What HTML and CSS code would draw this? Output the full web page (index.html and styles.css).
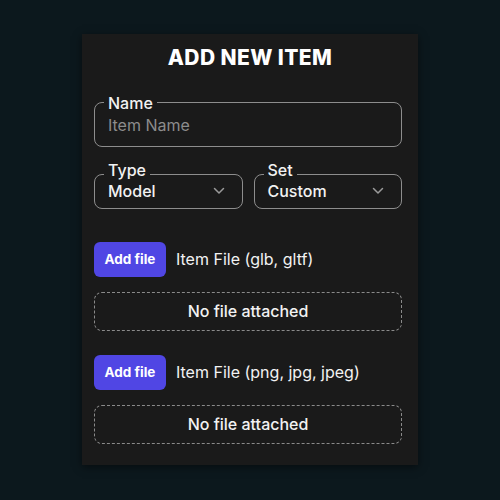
FILE: index.html
```html
<!DOCTYPE html>
<html lang="en">
<head>
    <meta charset="UTF-8">
    <meta name="viewport" content="width=device-width, initial-scale=1.0">
    <title>Add New Item</title>
    <link rel="stylesheet" href="styles.css">
</head>
<body>
    <div class="item-card">
        <h1 class="item-title">ADD NEW ITEM</h1>

        <fieldset class="field field-name">
            <legend class="field-label">Name</legend>
            <input class="field-input" type="text" placeholder="Item Name">
        </fieldset>

        <div class="field-row">
            <fieldset class="field field-select">
                <legend class="field-label">Type</legend>
                <div class="select-value">
                    <span>Model</span>
                    <svg class="chevron" width="12" height="8" viewBox="0 0 12 8"><path d="M1.5 1.5 L6 6 L10.5 1.5" fill="none" stroke="#9a9a9a" stroke-width="1.5" stroke-linecap="round" stroke-linejoin="round"/></svg>
                </div>
            </fieldset>
            <fieldset class="field field-select">
                <legend class="field-label">Set</legend>
                <div class="select-value">
                    <span>Custom</span>
                    <svg class="chevron" width="12" height="8" viewBox="0 0 12 8"><path d="M1.5 1.5 L6 6 L10.5 1.5" fill="none" stroke="#9a9a9a" stroke-width="1.5" stroke-linecap="round" stroke-linejoin="round"/></svg>
                </div>
            </fieldset>
        </div>

        <div class="file-group">
            <div class="file-head">
                <button class="file-button">Add file</button>
                <span class="file-label">Item File (glb, gltf)</span>
            </div>
            <div class="file-drop">No file attached</div>
        </div>

        <div class="file-group">
            <div class="file-head">
                <button class="file-button">Add file</button>
                <span class="file-label">Item File (png, jpg, jpeg)</span>
            </div>
            <div class="file-drop">No file attached</div>
        </div>
    </div>
</body>
</html>
```

FILE: styles.css
```css
* {
    margin: 0;
    padding: 0;
    box-sizing: border-box;
}

body {
    font-family: Inter, "Open Sans", sans-serif;
    background: #0c181d;
    min-height: 100vh;
    display: flex;
    align-items: center;
    justify-content: center;
    color: #f2f2f2;
}

.item-card {
    width: 336px;
    height: 431px;
    margin-top: -2px;
    padding: 10px 16px 0 12px;
    background: #1a1a1a;
    box-shadow: 0 2px 8px rgba(0, 0, 0, 0.5);
}

.item-title {
    text-align: center;
    font-size: 21px;
    font-weight: 800;
    letter-spacing: 0.4px;
    color: #ffffff;
    line-height: 28px;
    margin-bottom: 31px;
    padding-left: 4px;
}

.field {
    border: 1px solid #8d8d8d;
    border-radius: 8px;
    padding: 0 13px;
    min-width: 0;
}

.field-label {
    font-size: 16px;
    font-weight: 500;
    line-height: 16px;
    padding: 0 4px;
    margin-left: -4px;
    color: #f2f2f2;
}

.field-name {
    height: 52px;
    margin-top: -8px;
}

.field-input {
    width: 100%;
    background: transparent;
    border: none;
    outline: none;
    font-family: inherit;
    font-size: 16px;
    line-height: 24px;
    color: #f2f2f2;
    margin-top: 2px;
}

.field-input::placeholder {
    color: #8c8c8c;
}

.field-row {
    display: flex;
    gap: 11px;
    margin-top: 20px;
}

.field-select {
    flex: 1;
    height: 42px;
}

/* label sits on top of the outline in the select boxes */
.field-select .field-label {
    transform: translateY(-5px);
}

.select-value {
    display: flex;
    align-items: center;
    justify-content: space-between;
    font-size: 16px;
    font-weight: 500;
    line-height: 24px;
    margin-top: -4px;
    padding-right: 2px;
}

.chevron {
    margin-right: 2px;
}

.file-group {
    margin-top: 33px;
}

.file-group + .file-group {
    margin-top: 24px;
}

.file-head {
    display: flex;
    align-items: center;
    gap: 10px;
}

.file-button {
    width: 72px;
    height: 35px;
    border: none;
    border-radius: 6px;
    background: #5046e4;
    color: #ffffff;
    font-family: inherit;
    font-size: 13.5px;
    font-weight: 700;
}

.file-label {
    font-size: 16px;
    color: #f2f2f2;
}

.file-drop {
    margin-top: 15px;
    height: 39px;
    border: 1px dashed #8a8a8a;
    border-radius: 8px;
    display: flex;
    align-items: center;
    justify-content: center;
    font-size: 16px;
    font-weight: 500;
}
```
